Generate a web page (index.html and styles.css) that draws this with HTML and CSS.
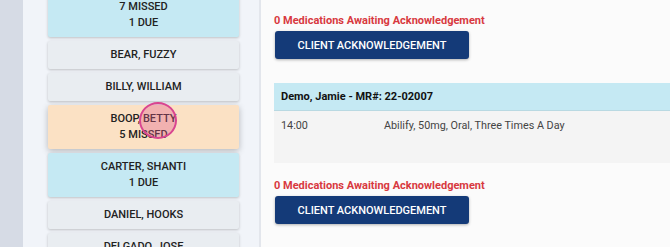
FILE: index.html
```html
<!DOCTYPE html>
<html>
<head>
  <title>Medication Pass</title>
  <meta name="viewport" content="width=device-width, initial-scale=1.0">
  <link rel="stylesheet" href="styles.css">
</head>
<body>
  <div class="layout">
    <div class="rail"></div>
    <div class="clients">
      <div class="client-list">
        <div class="client-card due">
          <span>7 MISSED</span>
          <span>1 DUE</span>
        </div>
        <div class="client-card">
          <span>BEAR, FUZZY</span>
        </div>
        <div class="client-card">
          <span>BILLY, WILLIAM</span>
        </div>
        <div class="client-card missed">
          <span>BOOP, BETTY</span>
          <span>5 MISSED</span>
          <div class="touch"></div>
        </div>
        <div class="client-card due">
          <span>CARTER, SHANTI</span>
          <span>1 DUE</span>
        </div>
        <div class="client-card">
          <span>DANIEL, HOOKS</span>
        </div>
        <div class="client-card">
          <span>DELGADO, JOSE</span>
        </div>
      </div>
    </div>
    <div class="main">
      <div class="ack-block">
        <div class="ack-count">0 Medications Awaiting Acknowledgement</div>
        <button class="ack-btn">Client Acknowledgement</button>
      </div>

      <div class="med-table">
        <div class="med-head">Demo, Jamie - MR#: 22-02007</div>
        <div class="med-row">
          <span class="med-time">14:00</span>
          <span class="med-name">Abilify, 50mg, Oral, Three Times A Day</span>
        </div>
      </div>

      <div class="ack-block second">
        <div class="ack-count">0 Medications Awaiting Acknowledgement</div>
        <button class="ack-btn">Client Acknowledgement</button>
      </div>
    </div>
  </div>
</body>
</html>
```

FILE: styles.css
```css
* {
  margin: 0;
  padding: 0;
  box-sizing: border-box;
}

body {
  font-family: Roboto, 'Liberation Sans', Arial, sans-serif;
  background: #fbfbfb;
  color: #222;
  overflow: hidden;
}

.layout {
  display: flex;
  height: 247px;
}

.rail {
  width: 23px;
  flex: none;
  background: #d6dbe5;
}

.clients {
  width: 238px;
  flex: none;
  background: #f1f4f9;
  border-right: 2px solid #e3e6ec;
  padding: 0 20px 0 25px;
  overflow: hidden;
}

.client-list {
  display: flex;
  flex-direction: column;
  gap: 4px;
  margin-top: -7px;
}

.client-card {
  position: relative;
  display: flex;
  flex-direction: column;
  align-items: center;
  padding: 6px 0;
  background: #e9edf1;
  border-radius: 2px;
  box-shadow: 0 1px 3px rgba(0, 0, 0, 0.22);
  font-size: 11px;
  font-weight: 500;
  line-height: 16px;
  color: #222;
}

.client-card.due {
  background: #c5e9f3;
}

.client-card.missed {
  background: #fbe1c4;
  box-shadow: 0 2px 6px rgba(0, 0, 0, 0.25);
}

/* tap indicator */
.touch {
  position: absolute;
  left: 91px;
  top: -3px;
  width: 38px;
  height: 37px;
  border-radius: 50%;
  border: 2px solid #d94590;
  background: rgba(224, 90, 140, 0.35);
}

.main {
  flex: 1;
  padding: 13px 0 0 13px;
  overflow: hidden;
}

.ack-count {
  font-size: 11px;
  font-weight: 700;
  line-height: 16px;
  color: #d8393f;
}

.ack-btn {
  display: block;
  width: 194px;
  height: 28px;
  margin: 2px 0 0 1px;
  background: #143a78;
  color: #fff;
  border: none;
  border-radius: 3px;
  box-shadow: 0 1px 3px rgba(0, 0, 0, 0.3);
  font-family: inherit;
  font-size: 11px;
  font-weight: 500;
  text-transform: uppercase;
}

.ack-block.second {
  margin-top: 15px;
}

.med-table {
  margin-top: 24px;
}

.med-head {
  height: 28px;
  padding: 0 7px;
  display: flex;
  align-items: center;
  background: #c5e9f3;
  border-bottom: 1px solid #b9d9e2;
  font-size: 11px;
  font-weight: 700;
  color: #111;
}

.med-row {
  display: flex;
  height: 52px;
  padding: 7px 7px 0;
  background: #f4f4f4;
  font-size: 10.8px;
  line-height: 16px;
  color: #444;
}

.med-time {
  width: 103px;
}
```
